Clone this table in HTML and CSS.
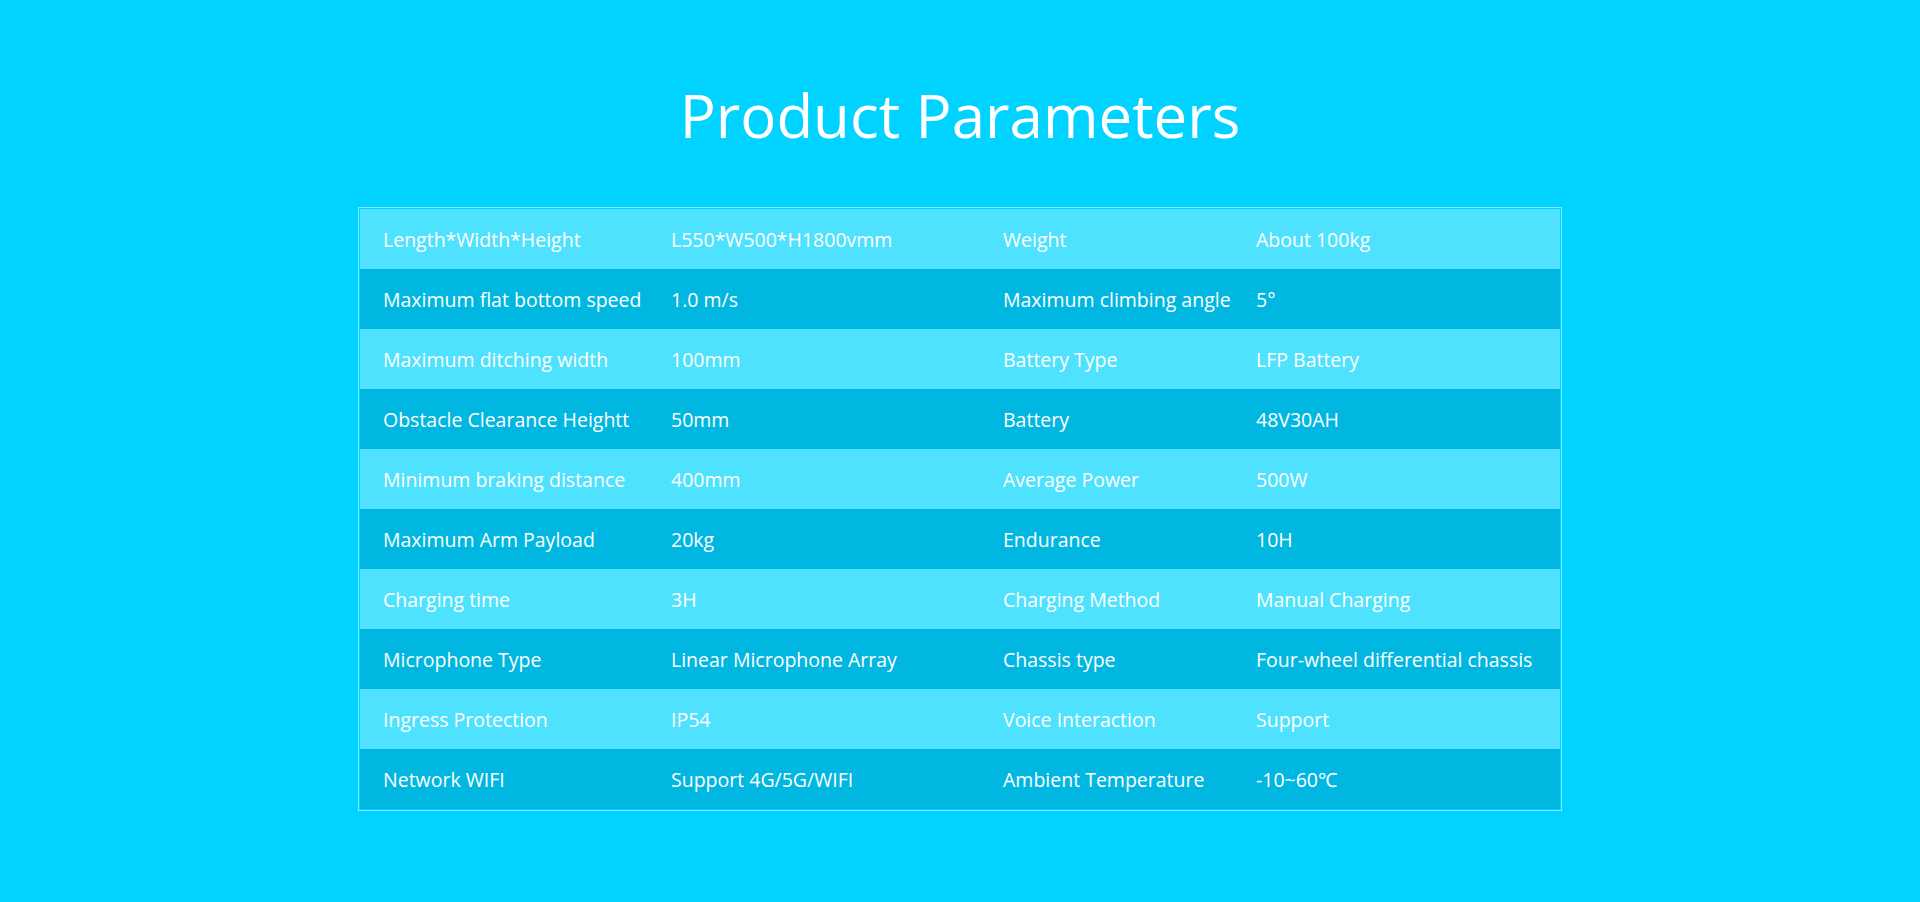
FILE: index.html
```html
<!DOCTYPE html>
<html lang="en">
<head>
<meta charset="utf-8">
<title>Product Parameters</title>
<link rel="stylesheet" href="styles.css">
</head>
<body>
<section class="params">
  <h1 class="params-title">Product Parameters</h1>
  <div class="params-table">
    <div class="row light"><div class="cell">Length*Width*Height</div><div class="cell">L550*W500*H1800vmm</div><div class="cell">Weight</div><div class="cell">About 100kg</div></div>
    <div class="row dark"><div class="cell">Maximum flat bottom speed</div><div class="cell">1.0 m/s</div><div class="cell">Maximum climbing angle</div><div class="cell">5°</div></div>
    <div class="row light"><div class="cell">Maximum ditching width</div><div class="cell">100mm</div><div class="cell">Battery Type</div><div class="cell">LFP Battery</div></div>
    <div class="row dark"><div class="cell">Obstacle Clearance Heightt</div><div class="cell">50mm</div><div class="cell">Battery</div><div class="cell">48V30AH</div></div>
    <div class="row light"><div class="cell">Minimum braking distance</div><div class="cell">400mm</div><div class="cell">Average Power</div><div class="cell">500W</div></div>
    <div class="row dark"><div class="cell">Maximum Arm Payload</div><div class="cell">20kg</div><div class="cell">Endurance</div><div class="cell">10H</div></div>
    <div class="row light"><div class="cell">Charging time</div><div class="cell">3H</div><div class="cell">Charging Method</div><div class="cell">Manual Charging</div></div>
    <div class="row dark"><div class="cell">Microphone Type</div><div class="cell">Linear Microphone Array</div><div class="cell">Chassis type</div><div class="cell">Four-wheel differential chassis</div></div>
    <div class="row light"><div class="cell">Ingress Protection</div><div class="cell">IP54</div><div class="cell">Voice Interaction</div><div class="cell">Support</div></div>
    <div class="row dark"><div class="cell">Network WIFI</div><div class="cell">Support 4G/5G/WIFI</div><div class="cell">Ambient Temperature</div><div class="cell">-10~60℃</div></div>
  </div>
</section>
</body>
</html>
```

FILE: styles.css
```css
* { box-sizing: border-box; }
html, body {
  margin: 0;
  padding: 0;
  background: #00d3ff;
  height: 100%;
}
body {
  font-family: "Open Sans", "Noto Sans", "Liberation Sans", sans-serif;
  color: #ffffff;
}
.params {
  padding-top: 85px;
  display: flex;
  flex-direction: column;
  align-items: center;
}
.params-title {
  margin: 0;
  font-size: 60px;
  line-height: 60px;
  font-weight: 500;
  letter-spacing: 0;
  color: #ffffff;
}
.params-table {
  margin-top: 62px;
  width: 1204px;
  border: 1px solid #7fe9ff;
  padding: 1px;
}
.row {
  display: grid;
  grid-template-columns: 288px 332px 253px 327px;
  height: 60px;
  align-items: center;
}
.row.light { background: #4fe2ff; }
.row.dark { background: #00b7e2; }
.cell {
  padding-left: 23px;
  font-size: 19.5px;
  white-space: nowrap;
  color: #ffffff;
}
```
